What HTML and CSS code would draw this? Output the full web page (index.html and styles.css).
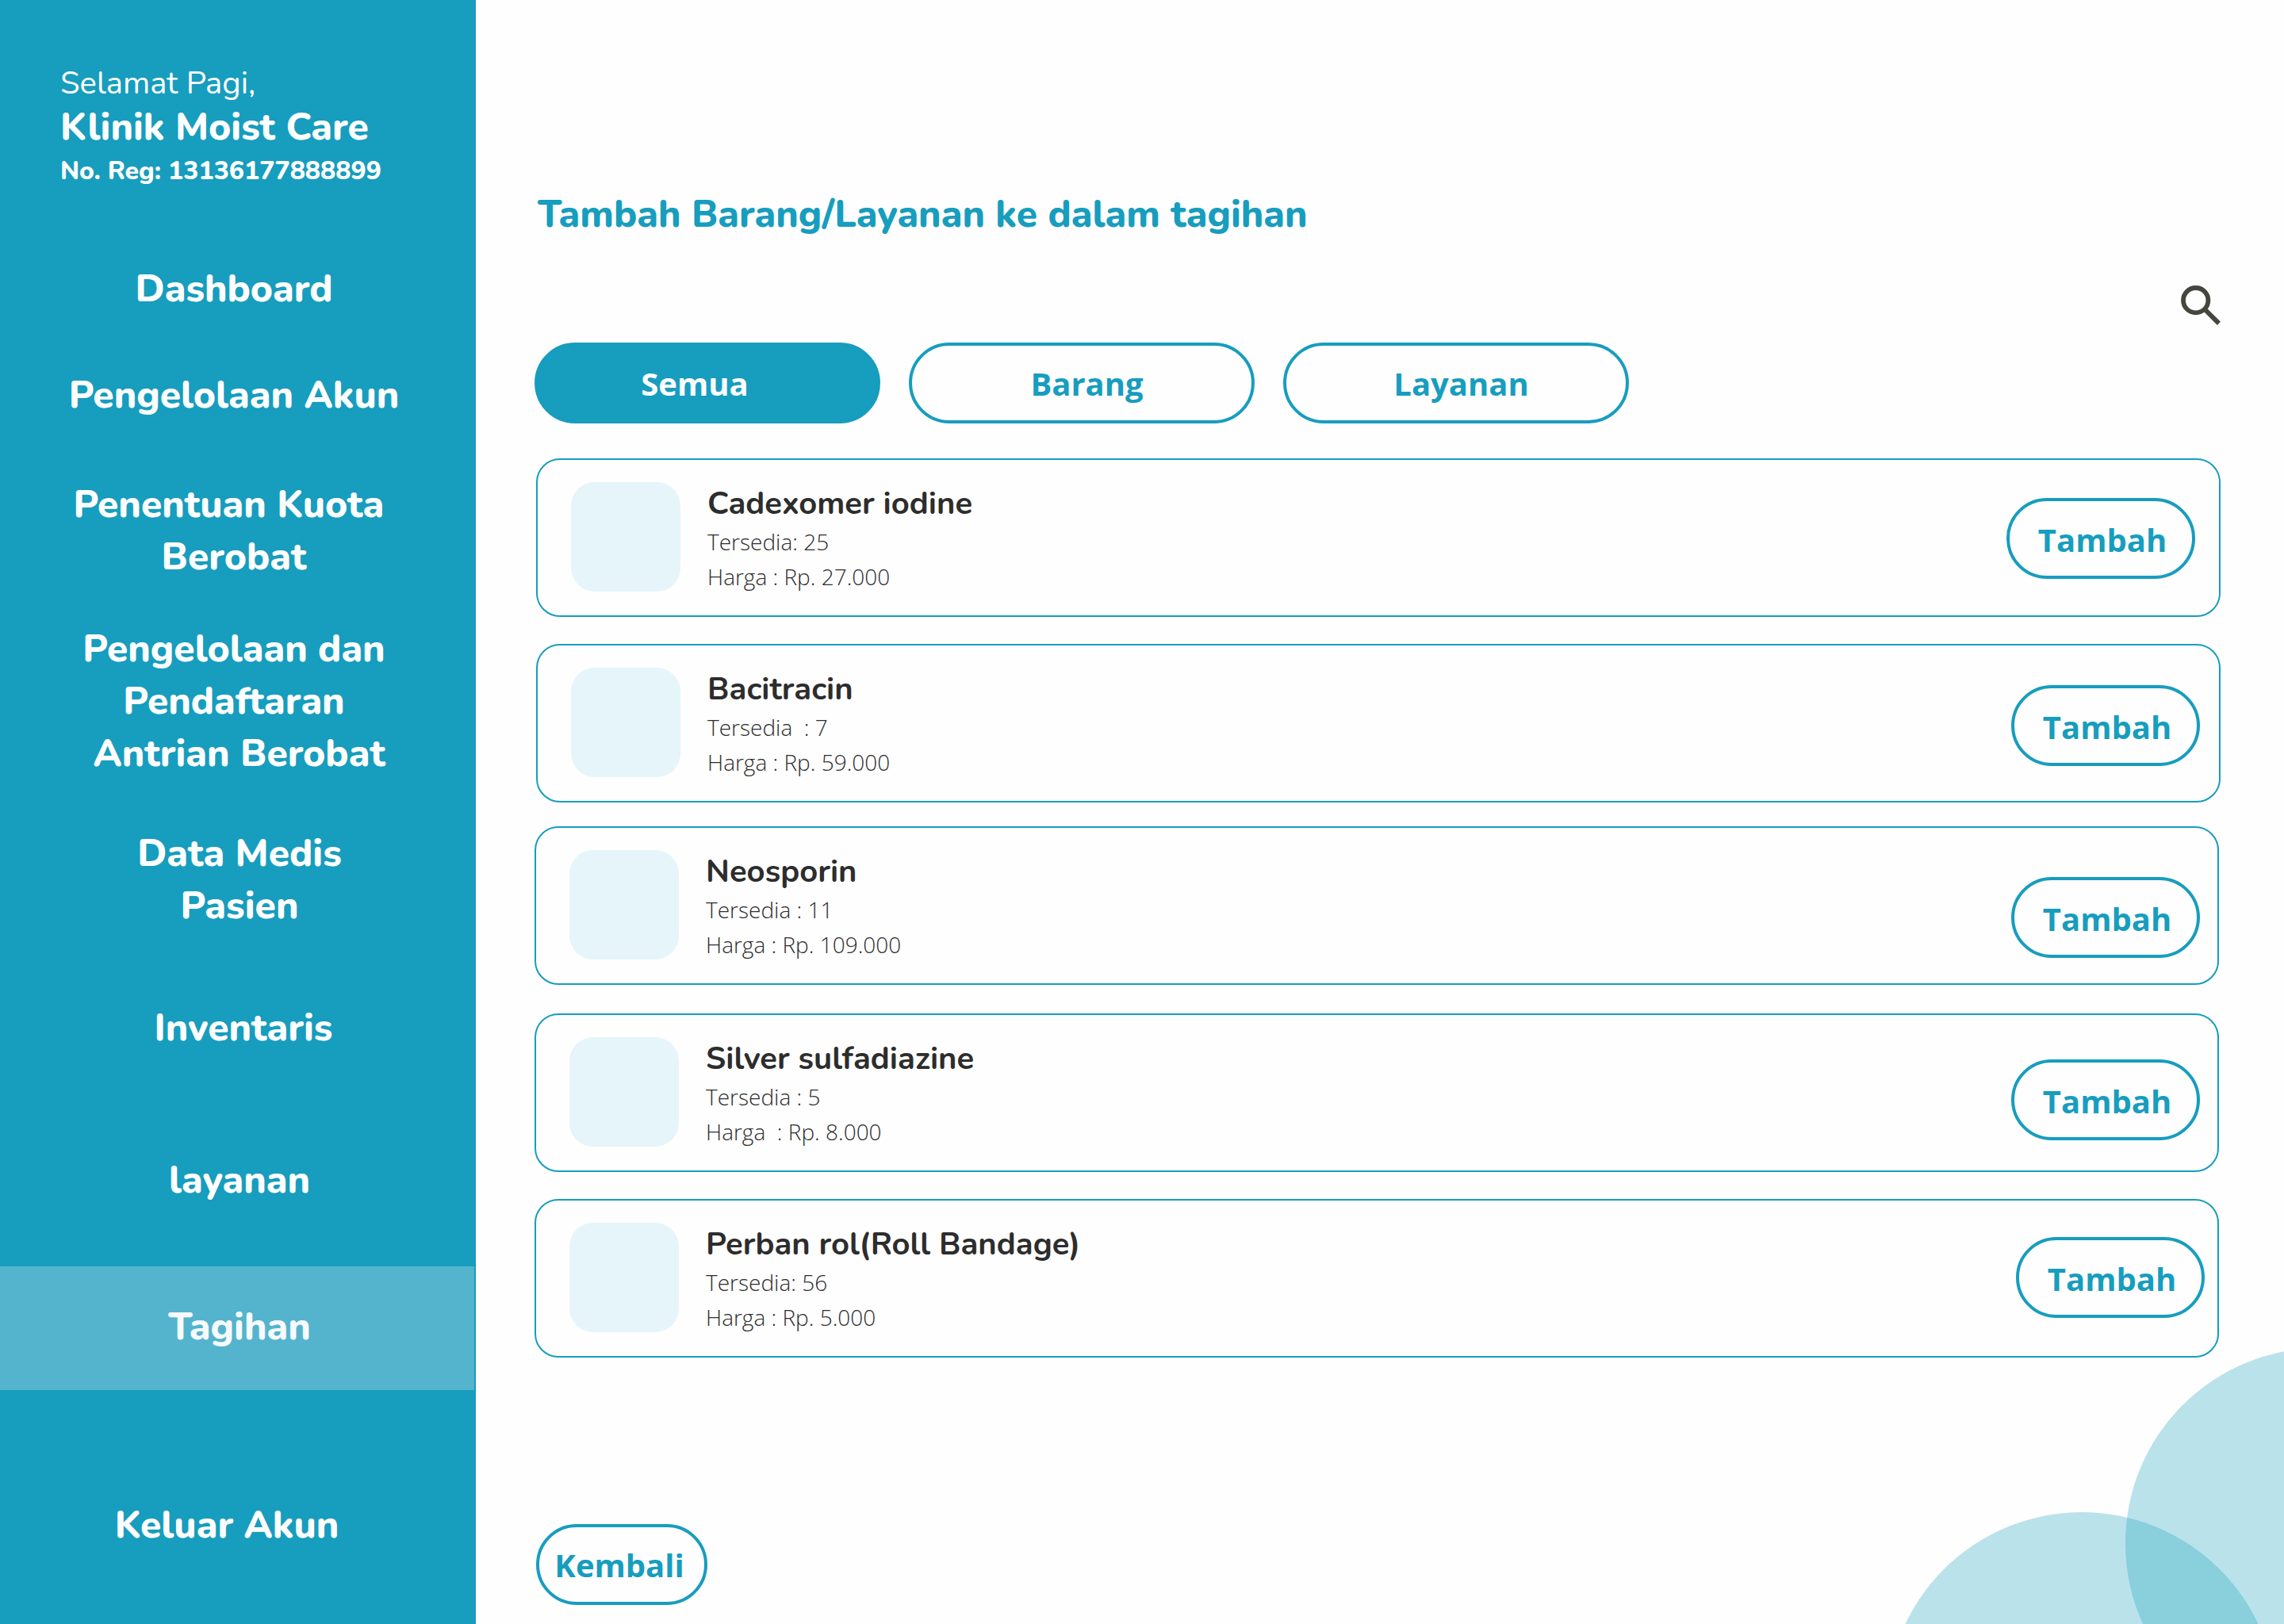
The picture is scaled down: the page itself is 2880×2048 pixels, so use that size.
FILE: index.html
```html
<!DOCTYPE html>
<html lang="id">
<head>
  <meta charset="utf-8">
  <meta name="viewport" content="width=device-width, initial-scale=1">
  <title>Tambah Barang/Layanan - Klinik Moist Care</title>
  <link rel="stylesheet" href="styles.css">
</head>
<body>
  <div class="page">
    <aside class="sidebar">
      <header class="clinic">
        <p class="clinic-greeting">Selamat Pagi,</p>
        <p class="clinic-name">Klinik Moist Care</p>
        <p class="clinic-reg">No. Reg: 13136177888899</p>
      </header>
      <nav class="nav" aria-label="Menu utama">
        <div class="nav-group nav-group-admin">
          <a class="nav-link" href="#dashboard">Dashboard</a>
          <a class="nav-link" href="#akun">Pengelolaan Akun</a>
          <a class="nav-link nav-link-quota" href="#kuota">Penentuan Kuota&nbsp;<br>Berobat</a>
          <a class="nav-link nav-link-queue" href="#antrian">Pengelolaan dan<br>Pendaftaran<br>&nbsp;Antrian Berobat</a>
        </div>
        <div class="nav-group nav-group-data">
          <a class="nav-link nav-link-records" href="#pasien">Data Medis<br>Pasien</a>
          <a class="nav-link nav-link-stock" href="#inventaris">Inventaris</a>
          <a class="nav-link nav-link-service" href="#layanan">layanan</a>
          <a class="nav-link nav-link-active" href="#tagihan" aria-current="page">Tagihan</a>
        </div>
        <a class="nav-link nav-link-logout" href="#keluar">Keluar Akun</a>
      </nav>
    </aside>

    <main class="main">
      <h1 class="title">Tambah Barang/Layanan ke dalam tagihan</h1>
      <div class="tools">
        <button class="search" type="button" aria-label="Cari">
          <svg class="search-icon" viewBox="0 0 50 50" aria-hidden="true">
            <circle cx="18.7" cy="18.7" r="15.7" fill="none" stroke="currentColor" stroke-width="5.8"/>
            <path d="M28.4 32.6 32.6 28.4 50 45.8 45.8 50Z" fill="currentColor"/>
          </svg>
        </button>
      </div>
      <div class="tabs">
        <button class="pill tab tab-active" type="button" aria-pressed="true">Semua</button>
        <button class="pill tab" type="button" aria-pressed="false">Barang</button>
        <button class="pill tab" type="button" aria-pressed="false">Layanan</button>
      </div>
      <ul class="items">
        <li class="item">
          <div class="thumb"></div>
          <div class="info">
            <h2 class="item-name">Cadexomer iodine</h2>
            <p class="item-detail">Tersedia: 25</p>
            <p class="item-detail">Harga : Rp. 27.000</p>
          </div>
          <button class="pill add" type="button">Tambah</button>
        </li>
        <li class="item">
          <div class="thumb"></div>
          <div class="info">
            <h2 class="item-name">Bacitracin</h2>
            <p class="item-detail">Tersedia  : 7</p>
            <p class="item-detail">Harga : Rp. 59.000</p>
          </div>
          <button class="pill add" type="button">Tambah</button>
        </li>
        <li class="item">
          <div class="thumb"></div>
          <div class="info">
            <h2 class="item-name">Neosporin</h2>
            <p class="item-detail">Tersedia : 11</p>
            <p class="item-detail">Harga : Rp. 109.000</p>
          </div>
          <button class="pill add" type="button">Tambah</button>
        </li>
        <li class="item">
          <div class="thumb"></div>
          <div class="info">
            <h2 class="item-name">Silver sulfadiazine</h2>
            <p class="item-detail">Tersedia : 5</p>
            <p class="item-detail">Harga  : Rp. 8.000</p>
          </div>
          <button class="pill add" type="button">Tambah</button>
        </li>
        <li class="item">
          <div class="thumb"></div>
          <div class="info">
            <h2 class="item-name">Perban rol(Roll Bandage)</h2>
            <p class="item-detail">Tersedia: 56</p>
            <p class="item-detail">Harga : Rp. 5.000</p>
          </div>
          <button class="pill add" type="button">Tambah</button>
        </li>
      </ul>
      <button class="pill back" type="button">Kembali</button>
      <div class="bubble bubble-low"></div>
      <div class="bubble bubble-high"></div>
    </main>
  </div>
</body>
</html>
```
FILE: styles.css
```css
:root {
  --primary: #179dbe;
  --surface: #fefefe;
  --ink: #2d2d2d;
}

* {
  box-sizing: border-box;
}

body,
h1,
h2,
p,
ul {
  margin: 0;
  padding: 0;
}

body {
  background: var(--surface);
  color: var(--ink);
  font-family: "Nunito", "Open Sans", sans-serif;
}

.page {
  display: flex;
  min-height: 100vh;
}

/* Sidebar */

.sidebar {
  flex: 0 0 600px;
  display: flex;
  flex-direction: column;
  padding-top: 78px;
  background: var(--primary);
  color: #ffffff;
}

.clinic {
  padding-left: 76px;
}

.clinic-greeting {
  font-size: 40px;
  font-weight: 400;
  line-height: 54px;
}

.clinic-name {
  font-size: 48px;
  font-weight: 800;
  line-height: 56px;
}

.clinic-reg {
  font-size: 32px;
  font-weight: 800;
  line-height: 56px;
}

.nav {
  flex: 1;
  display: flex;
  flex-direction: column;
  padding-top: 87px;
  padding-bottom: 92px;
}

.nav-group {
  display: flex;
  flex-direction: column;
}

.nav-group-admin {
  gap: 68px;
  padding-right: 10px;
}

.nav-group-data {
  padding-right: 2px;
}

.nav-link {
  color: inherit;
  font-size: 48px;
  font-weight: 800;
  line-height: 66px;
  text-align: center;
  text-decoration: none;
}

.nav-group-data .nav-link {
  padding-left: 6px;
}

.nav-link-quota {
  margin-top: 4px;
}

.nav-link-queue {
  margin-top: -18px;
}

.nav-link-records {
  margin-top: 60px;
}

.nav-group-data .nav-link-stock {
  margin-top: 88px;
  padding-left: 16px;
}

.nav-link-service {
  margin-top: 126px;
}

.nav-link-active {
  margin-top: 76px;
  padding-top: 43px;
  padding-bottom: 47px;
  background: #54b4cd;
  color: #f7fafc;
}

.nav-link-logout {
  margin-top: auto;
  padding-right: 28px;
}

/* Main column */

.main {
  position: relative;
  flex: 1;
  display: flex;
  flex-direction: column;
  padding: 237px 80px 24px 74px;
  overflow: hidden;
}

.title {
  padding-left: 4px;
  color: var(--primary);
  font-size: 48px;
  font-weight: 800;
  line-height: 66px;
}

.tools {
  display: flex;
  justify-content: flex-end;
  margin-top: 57px;
}

.search {
  width: 50px;
  height: 50px;
  padding: 0;
  border: 0;
  background: none;
  color: #45463c;
  cursor: pointer;
}

.search-icon {
  display: block;
  width: 100%;
  height: 100%;
}

.pill {
  height: 102px;
  padding: 0;
  border: 4px solid var(--primary);
  border-radius: 51px;
  background: var(--surface);
  color: var(--primary);
  font-family: "Open Sans", sans-serif;
  font-size: 40px;
  font-weight: 700;
  line-height: 54px;
  text-align: center;
  cursor: pointer;
}

.tabs {
  display: flex;
  flex-wrap: wrap;
  gap: 36px;
  margin-top: 22px;
}

.tab {
  width: 436px;
  padding-top: 2px;
  padding-left: 13px;
}

.tab-active {
  padding-right: 32px;
  padding-left: 0;
  background: var(--primary);
  color: #ffffff;
}

.items {
  display: flex;
  flex-direction: column;
  margin-top: 44px;
  list-style: none;
}

.item {
  display: flex;
  align-items: flex-start;
  margin-left: 2px;
  padding: 28px 30px 27px 42px;
  border: 2px solid var(--primary);
  border-radius: 30px;
  background: var(--surface);
}

.item + .item {
  margin-top: 34px;
}

.item:nth-child(2) {
  padding-right: 24px;
}

.item:nth-child(n + 3) {
  margin-right: 2px;
  margin-left: 0;
  padding-right: 22px;
}

.item:nth-child(3) {
  margin-top: 30px;
}

.item:nth-child(4) {
  margin-top: 36px;
}

.item:nth-child(5) {
  padding-right: 16px;
}

.thumb {
  flex: none;
  width: 138px;
  height: 138px;
  border-radius: 30px;
  background: #e6f5f9;
}

.info {
  flex: 1;
  margin-left: 34px;
  padding-top: 1px;
}

.item-name {
  font-size: 40px;
  font-weight: 700;
  line-height: 52px;
}

.item-detail {
  font-family: "Open Sans", sans-serif;
  font-size: 28px;
  font-weight: 300;
  line-height: 44px;
  white-space: pre-wrap;
}

.add {
  width: 238px;
  margin-top: 20px;
  padding-top: 4px;
  padding-left: 4px;
}

.item:nth-child(2) .add {
  margin-top: 22px;
}

.item:nth-child(3) .add {
  margin-top: 34px;
}

.item:nth-child(4) .add {
  margin-top: 28px;
}

.item:nth-child(5) .add {
  margin-top: 18px;
}

.back {
  align-self: flex-start;
  width: 216px;
  margin-top: auto;
  margin-left: 2px;
  padding-top: 2px;
  padding-right: 6px;
}

/* Corner decoration */

.bubble {
  position: absolute;
  width: 492px;
  height: 492px;
  border-radius: 50%;
  background: rgba(25, 162, 190, 0.3);
  pointer-events: none;
}

.bubble-low {
  right: 9px;
  bottom: -351px;
}

.bubble-high {
  right: -292px;
  bottom: -144px;
}
```
